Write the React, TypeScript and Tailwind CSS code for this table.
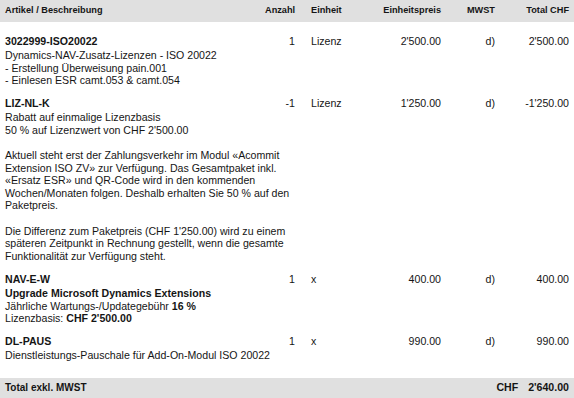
const cols = "grid grid-cols-[260px_30px_50px_96px_54px_74px]";

type Posten = {
  artikel: string;
  anzahl: string;
  einheit: string;
  preis: string;
  total: string;
  zeilen: React.ReactNode[];
};

const posten: Posten[] = [
  {
    artikel: "3022999-ISO20022",
    anzahl: "1",
    einheit: "Lizenz",
    preis: "2'500.00",
    total: "2'500.00",
    zeilen: [
      "Dynamics-NAV-Zusatz-Lizenzen - ISO 20022",
      "- Erstellung Überweisung pain.001",
      "- Einlesen ESR camt.053 & camt.054",
    ],
  },
  {
    artikel: "LIZ-NL-K",
    anzahl: "-1",
    einheit: "Lizenz",
    preis: "1'250.00",
    total: "-1'250.00",
    zeilen: [
      "Rabatt auf einmalige Lizenzbasis",
      "50 % auf Lizenzwert von CHF 2'500.00",
      "",
      "Aktuell steht erst der Zahlungsverkehr im Modul «Acommit",
      "Extension ISO ZV» zur Verfügung. Das Gesamtpaket inkl.",
      "«Ersatz ESR» und QR-Code wird in den kommenden",
      "Wochen/Monaten folgen. Deshalb erhalten Sie 50 % auf den",
      "Paketpreis.",
      "",
      "Die Differenz zum Paketpreis (CHF 1'250.00) wird zu einem",
      "späteren Zeitpunkt in Rechnung gestellt, wenn die gesamte",
      "Funktionalität zur Verfügung steht.",
    ],
  },
  {
    artikel: "NAV-E-W",
    anzahl: "1",
    einheit: "x",
    preis: "400.00",
    total: "400.00",
    zeilen: [
      <span className="font-bold">Upgrade Microsoft Dynamics Extensions</span>,
      <>
        Jährliche Wartungs-/Updategebühr <span className="font-bold">16 %</span>
      </>,
      <>
        Lizenzbasis: <span className="font-bold">CHF 2'500.00</span>
      </>,
    ],
  },
  {
    artikel: "DL-PAUS",
    anzahl: "1",
    einheit: "x",
    preis: "990.00",
    total: "990.00",
    zeilen: ["Dienstleistungs-Pauschale für Add-On-Modul ISO 20022"],
  },
];

function Zeile({ p }: { p: Posten }) {
  return (
    <div>
      <div className={`${cols} leading-[15px]`}>
        <span className="font-bold">{p.artikel}</span>
        <span className="text-right">{p.anzahl}</span>
        <span className="pl-[16px]">{p.einheit}</span>
        <span className="text-right">{p.preis}</span>
        <span className="text-right">d)</span>
        <span className="text-right">{p.total}</span>
      </div>
      <div className="leading-[12.6px]">
        {p.zeilen.map((z, i) => (
          <div key={i} className="h-[12.6px] whitespace-nowrap">
            {z}
          </div>
        ))}
      </div>
    </div>
  );
}

export default function App() {
  return (
    <div className="h-[398px] w-[574px] overflow-hidden bg-white font-['Liberation_Sans',Arial,sans-serif] text-[10.6px] text-[#151515]">
      <div className={`${cols} h-[22px] items-center bg-[#e0e0e0] px-[5px] text-[9.2px] font-bold`}>
        <span>Artikel / Beschreibung</span>
        <span className="text-right">Anzahl</span>
        <span className="pl-[16px]">Einheit</span>
        <span className="text-right">Einheitspreis</span>
        <span className="text-right">MWST</span>
        <span className="text-right">Total CHF</span>
      </div>

      <div className="flex flex-col gap-[9.5px] px-[5px] pt-[12px]">
        {posten.map((p) => (
          <Zeile key={p.artikel} p={p} />
        ))}
      </div>

      <div className="mt-[16px] flex h-[20px] items-center justify-between bg-[#e0e0e0] px-[5px] font-bold">
        <span className="text-[10px]">Total exkl. MWST</span>
        <span className="flex gap-[10px]">
          <span>CHF</span>
          <span>2'640.00</span>
        </span>
      </div>
    </div>
  );
}
